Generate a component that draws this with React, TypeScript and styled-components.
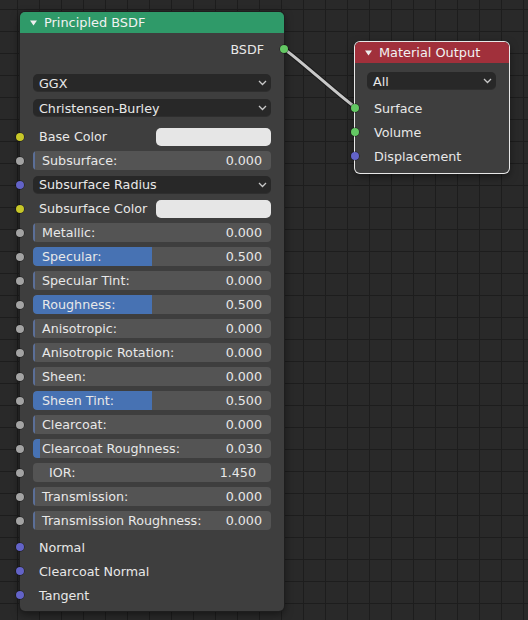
import React from 'react';
import styled, { createGlobalStyle } from 'styled-components';

const GlobalStyle = createGlobalStyle`
  html, body {
    margin: 0;
    padding: 0;
    background: #282828;
  }
  body {
    font-family: 'DejaVu Sans', 'Liberation Sans', sans-serif;
  }
`;

type SocketColor = 'grey' | 'yellow' | 'purple' | 'green';

const socketColors: Record<SocketColor, string> = {
  grey: '#a3a3a3',
  yellow: '#c7c729',
  purple: '#6363c7',
  green: '#63c763',
};

type InputRow =
  | { type: 'color'; label: string }
  | { type: 'menu'; label: string }
  | { type: 'slider'; label: string; value: number; factor?: boolean };

const inputs: InputRow[] = [
  { type: 'color', label: 'Base Color' },
  { type: 'slider', label: 'Subsurface', value: 0 },
  { type: 'menu', label: 'Subsurface Radius' },
  { type: 'color', label: 'Subsurface Color' },
  { type: 'slider', label: 'Metallic', value: 0 },
  { type: 'slider', label: 'Specular', value: 0.5 },
  { type: 'slider', label: 'Specular Tint', value: 0 },
  { type: 'slider', label: 'Roughness', value: 0.5 },
  { type: 'slider', label: 'Anisotropic', value: 0 },
  { type: 'slider', label: 'Anisotropic Rotation', value: 0 },
  { type: 'slider', label: 'Sheen', value: 0 },
  { type: 'slider', label: 'Sheen Tint', value: 0.5 },
  { type: 'slider', label: 'Clearcoat', value: 0 },
  { type: 'slider', label: 'Clearcoat Roughness', value: 0.03 },
  { type: 'slider', label: 'IOR', value: 1.45, factor: false },
  { type: 'slider', label: 'Transmission', value: 0 },
  { type: 'slider', label: 'Transmission Roughness', value: 0 },
];

const vectorInputs = ['Normal', 'Clearcoat Normal', 'Tangent'];

const Chevron = () => (
  <svg width="9" height="6" viewBox="0 0 9 6">
    <path d="M1 1 L4.5 4.5 L8 1" fill="none" stroke="#c8c8c8" strokeWidth="1.3" />
  </svg>
);

const Collapse = () => (
  <svg width="7" height="6" viewBox="0 0 7 6">
    <polygon points="0,0.5 7,0.5 3.5,5.5" fill="#eeeeee" />
  </svg>
);

const socketFor = (row: InputRow): SocketColor => {
  if (row.type === 'color') return 'yellow';
  if (row.type === 'menu') return 'purple';
  return 'grey';
};

const LINK = 'M284 49 C 294 55, 344 100, 355 107';

const App = () => {
  return (
    <>
      <GlobalStyle />
      <Canvas>
        <Links width="528" height="620" viewBox="0 0 528 620">
          <path d={LINK} fill="none" stroke="#1a1a1a" strokeWidth="5" />
          <path d={LINK} fill="none" stroke="#c8c8c8" strokeWidth="3" />
        </Links>

        <Node $x={20} $y={12} $w={264}>
          <Header $color="#2f9a69">
            <Collapse />
            Principled BSDF
          </Header>
          <Body $top={4} $bottom={4}>
            <OutputRow>
              BSDF
              <Socket $color={socketColors.green} $side="right" />
            </OutputRow>
            <Menus>
              <Dropdown>
                GGX
                <Chevron />
              </Dropdown>
              <Dropdown>
                Christensen-Burley
                <Chevron />
              </Dropdown>
            </Menus>
            <Inputs>
              {inputs.map((row) => (
                <Row key={row.label}>
                  <Socket $color={socketColors[socketFor(row)]} $side="left" />
                  {row.type === 'color' && (
                    <>
                      <Label>{row.label}</Label>
                      <Swatch />
                    </>
                  )}
                  {row.type === 'menu' && (
                    <Dropdown $grow>
                      {row.label}
                      <Chevron />
                    </Dropdown>
                  )}
                  {row.type === 'slider' && (
                    <Slider $indent={row.factor === false}>
                      {row.factor !== false && (
                        <Fill style={{ width: `max(2px, ${row.value * 100}%)` }} $empty={row.value === 0} />
                      )}
                      <SliderText>{row.label}:</SliderText>
                      <SliderText>{row.value.toFixed(3)}</SliderText>
                    </Slider>
                  )}
                </Row>
              ))}
            </Inputs>
            {vectorInputs.map((label) => (
              <SocketRow key={label}>
                <Socket $color={socketColors.purple} $side="left" />
                <Label>{label}</Label>
              </SocketRow>
            ))}
          </Body>
        </Node>

        <Node $x={355} $y={42} $w={154} $active>
          <Header $color="#a1303b">
            <Collapse />
            Material Output
          </Header>
          <Body $top={9} $bottom={5}>
            <Dropdown $inset>
              All
              <Chevron />
            </Dropdown>
            <OutputSockets>
              <SocketRow>
                <Socket $color={socketColors.green} $side="left" />
                <Label>Surface</Label>
              </SocketRow>
              <SocketRow>
                <Socket $color={socketColors.green} $side="left" />
                <Label>Volume</Label>
              </SocketRow>
              <SocketRow>
                <Socket $color={socketColors.purple} $side="left" />
                <Label>Displacement</Label>
              </SocketRow>
            </OutputSockets>
          </Body>
        </Node>
      </Canvas>
    </>
  );
};

export default App;

const Canvas = styled.div`
  position: relative;
  width: 528px;
  height: 620px;
  overflow: hidden;
  background-color: #292929;
  background-image: linear-gradient(#1d1d1d 1px, transparent 1px),
    linear-gradient(90deg, #1d1d1d 1px, transparent 1px);
  background-size: 22px 22px;
  background-position: 17px 9px;
  color: #e8e8e8;
  font-size: 12.7px;
`;

const Links = styled.svg`
  position: absolute;
  left: 0;
  top: 0;
  pointer-events: none;
`;

const Node = styled.div<{ $x: number; $y: number; $w: number; $active?: boolean }>`
  position: absolute;
  left: ${(p) => p.$x}px;
  top: ${(p) => p.$y}px;
  width: ${(p) => p.$w}px;
  border-radius: 5px;
  background: #3e3e3e;
  box-shadow: ${(p) =>
    p.$active
      ? '0 0 0 1px #e8e8e8, 0 3px 8px rgba(0, 0, 0, 0.5)'
      : '0 0 0 1px #1e1e1e, 0 3px 8px rgba(0, 0, 0, 0.5)'};
`;

const Header = styled.div<{ $color: string }>`
  display: flex;
  align-items: center;
  gap: 7px;
  height: 21px;
  padding-left: 10px;
  border-radius: 5px 5px 0 0;
  background: ${(p) => p.$color};
  color: #f2f2f2;
  font-size: 12.9px;
`;

const Body = styled.div<{ $top: number; $bottom: number }>`
  display: flex;
  flex-direction: column;
  padding: ${(p) => p.$top}px 0 ${(p) => p.$bottom}px;
`;

const Socket = styled.span<{ $color: string; $side: 'left' | 'right' }>`
  position: absolute;
  top: 50%;
  ${(p) => p.$side}: -4px;
  width: 8px;
  height: 8px;
  margin-top: -4px;
  border-radius: 50%;
  background: ${(p) => p.$color};
  box-shadow: 0 0 0 0.5px rgba(0, 0, 0, 0.6);
`;

const OutputRow = styled.div`
  position: relative;
  display: flex;
  align-items: center;
  justify-content: flex-end;
  height: 24px;
  padding-right: 20px;
`;

const Menus = styled.div`
  display: flex;
  flex-direction: column;
  gap: 7px;
  margin-top: 13px;
  padding: 0 13px;
`;

const Dropdown = styled.div<{ $grow?: boolean; $inset?: boolean }>`
  display: flex;
  align-items: center;
  justify-content: space-between;
  height: 18px;
  padding: 0 4px 0 6px;
  ${(p) => (p.$grow ? 'flex: 1;' : '')}
  ${(p) => (p.$inset ? 'margin: 0 13px 0 12px;' : '')}
  border-radius: 5px;
  background: #282828;
  box-shadow: inset 0 -1px 0 rgba(255, 255, 255, 0.03);
`;

const Inputs = styled.div`
  display: flex;
  flex-direction: column;
  gap: 5px;
  margin-top: 10px;
  margin-bottom: 5px;
`;

const Row = styled.div`
  position: relative;
  display: flex;
  align-items: center;
  height: 19px;
  padding: 0 13px;
`;

const SocketRow = styled.div`
  position: relative;
  display: flex;
  align-items: center;
  height: 24px;
  padding: 0 13px;
`;

const Label = styled.span`
  padding-left: 6px;
  white-space: nowrap;
`;

const Swatch = styled.div`
  width: 115px;
  height: 18px;
  margin-left: auto;
  border-radius: 5px;
  background: #e6e6e6;
`;

const Slider = styled.div<{ $indent?: boolean }>`
  position: relative;
  flex: 1;
  display: flex;
  align-items: center;
  justify-content: space-between;
  height: 19px;
  padding: 0 ${(p) => (p.$indent ? '15px 0 16px' : '9px')};
  border-radius: 4px;
  background: #545454;
  overflow: hidden;
`;

const Fill = styled.div<{ $empty: boolean }>`
  position: absolute;
  left: 0;
  top: 0;
  bottom: 0;
  border-radius: 4px 0 0 4px;
  background: ${(p) => (p.$empty ? '#5b6f98' : '#4772b3')};
`;

const SliderText = styled.span`
  position: relative;
  white-space: nowrap;
`;

const OutputSockets = styled.div`
  display: flex;
  flex-direction: column;
  margin-top: 6px;
`;
